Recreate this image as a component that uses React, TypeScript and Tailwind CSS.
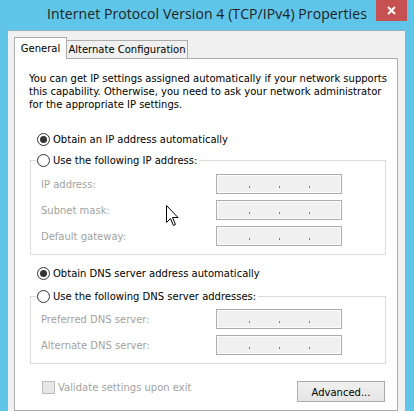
import React from 'react';

const dlg = "font-['DejaVu_Sans',sans-serif] text-[10px] leading-[13px]";

function Radio({ checked, label }: { checked?: boolean; label: string }) {
  return (
    <div className="flex h-[14px] items-center gap-[3px] text-black">
      <span className="flex h-[13px] w-[13px] items-center justify-center rounded-full border border-[#333] bg-white">
        {checked && <span className="h-[7px] w-[7px] rounded-full bg-[#333]" />}
      </span>
      <span className="pr-[2px]">{label}</span>
    </div>
  );
}

function IpField() {
  return (
    <div className="flex h-[20px] w-[126px] items-end border border-[#adadad] bg-[#f0f0f0] pb-[5px] pl-[17px] shadow-[inset_0_0_0_1px_#fbfbfb]">
      {[0, 1, 2].map(i => (
        <span key={i} className="flex w-[30px] justify-center">
          <span className="h-[2px] w-px bg-[#7d7d7d]" />
        </span>
      ))}
    </div>
  );
}

function FieldRow({ label }: { label: string }) {
  return (
    <div className="flex h-[20px] items-center">
      <span className="w-[175px] text-[#a2a2a2]">{label}</span>
      <IpField />
    </div>
  );
}

function Group({ legend, fields, topPad }: { legend: string; fields: string[]; topPad: string }) {
  return (
    <fieldset className="ml-[15px] w-[356px] border border-[#dcdcdc] pb-[8px]">
      <legend className="ml-[6px]">
        <Radio label={legend} />
      </legend>
      <div className={`flex flex-col gap-[6px] pl-[10px] ${topPad}`}>
        {fields.map(f => <FieldRow key={f} label={f} />)}
      </div>
    </fieldset>
  );
}

function Cursor() {
  return (
    <svg className="absolute left-[166px] top-[205px]" width="13" height="22" viewBox="0 0 13 22">
      <path d="M0.5 0.5 L0.5 17.5 L4.5 13.5 L7.5 20.5 L9.5 19.5 L6.5 12.5 L12 12.5 Z" fill="#fff" stroke="#000" strokeWidth="1" strokeLinejoin="miter" />
    </svg>
  );
}

export default function App() {
  return (
    <div className={`relative flex h-[411px] w-[414px] flex-col overflow-hidden bg-[#60c6e9] ${dlg}`}>
      {/* title bar */}
      <div className="grid h-[30px] shrink-0 grid-cols-[1fr_auto_1fr]">
        <div />
        <div className="pt-[4px] font-['Open_Sans',sans-serif] text-[14px] leading-[20px] tracking-[0.08px] text-[#222]">
          Internet Protocol Version 4 (TCP/IPv4) Properties
        </div>
        <div className="flex justify-end pr-[7px]">
          <button className="flex h-[21px] w-[31px] items-center justify-center bg-[#c75050]">
            <svg width="9" height="9" viewBox="0 0 9 9">
              <path d="M1 1 L8 8 M8 1 L1 8" stroke="#fff" strokeWidth="2" />
            </svg>
          </button>
        </div>
      </div>

      {/* client area */}
      <div className="ml-[7px] mr-[8px] flex flex-1 flex-col overflow-hidden border-x border-t border-[#8fb2c4] bg-[#f0f0f0] pl-[6px] pt-[6px]">
        <div className="flex h-[21px] items-end">
          <div className="relative z-10 -mb-px flex h-[22px] w-[53px] items-center justify-center border-x border-t border-[#adadad] bg-white pb-[1px] text-black">
            General
          </div>
          <div className="flex h-[18px] w-[121px] items-center justify-center border-r border-t border-[#adadad] bg-[#f0f0f0] text-black">
            Alternate Configuration
          </div>
        </div>

        <div className="flex w-[384px] flex-1 flex-col border border-[#adadad] bg-white">
          <p className="pl-[14px] pt-[13px] text-black">
            You can get IP settings assigned automatically if your network supports
            <br />
            this capability. Otherwise, you need to ask your network administrator
            <br />
            for the appropriate IP settings.
          </p>

          <div className="ml-[22px] mt-[21px]">
            <Radio checked label="Obtain an IP address automatically" />
          </div>
          <div className="mt-[7px]">
            <Group
              legend="Use the following IP address:"
              topPad="pt-[7px]"
              fields={['IP address:', 'Subnet mask:', 'Default gateway:']}
            />
          </div>

          <div className="ml-[22px] mt-[11px]">
            <Radio checked label="Obtain DNS server address automatically" />
          </div>
          <div className="mt-[9px]">
            <Group
              legend="Use the following DNS server addresses:"
              topPad="pt-[6px]"
              fields={['Preferred DNS server:', 'Alternate DNS server:']}
            />
          </div>

          <div className="mt-[17px] flex items-start justify-between pl-[27px] pr-[12px]">
            <div className="flex items-center gap-[3px] text-[#a2a2a2]">
              <span className="h-[13px] w-[13px] border border-[#bcbcbc] bg-[#e6e6e6]" />
              <span>Validate settings upon exit</span>
            </div>
            <button className="flex h-[21px] w-[88px] items-center justify-center border border-[#acacac] bg-gradient-to-b from-[#f0f0f0] to-[#e5e5e5] pt-[2px] text-black">
              Advanced...
            </button>
          </div>
        </div>
      </div>

      <Cursor />
    </div>
  );
}
